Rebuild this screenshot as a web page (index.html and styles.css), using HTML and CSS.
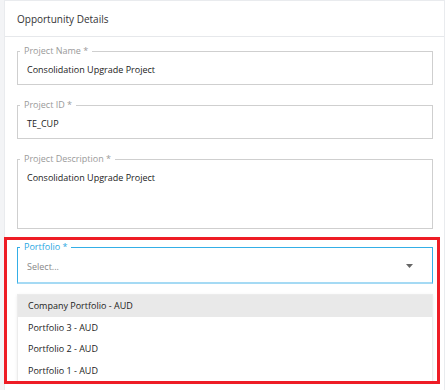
FILE: index.html
```html
<!DOCTYPE html>
<html>
<head>
<meta charset="utf-8">
<link rel="stylesheet" href="styles.css">
</head>
<body>
<div class="card">
  <div class="card-header">Opportunity Details</div>
  <div class="card-body">
    <fieldset class="field">
      <legend>Project Name *</legend>
      <div class="value">Consolidation Upgrade Project</div>
    </fieldset>
    <fieldset class="field">
      <legend>Project ID *</legend>
      <div class="value">TE_CUP</div>
    </fieldset>
    <fieldset class="field field-area">
      <legend>Project Description *</legend>
      <div class="value">Consolidation Upgrade Project</div>
    </fieldset>
    <fieldset class="field field-focus">
      <legend>Portfolio *</legend>
      <div class="select-row">
        <span class="placeholder">Select...</span>
        <svg class="caret" width="7" height="4" viewBox="0 0 7 4"><path d="M0 0H7L3.5 4Z" fill="#666"/></svg>
      </div>
    </fieldset>
    <ul class="menu">
      <li class="active">Company Portfolio - AUD</li>
      <li>Portfolio 3 - AUD</li>
      <li>Portfolio 2 - AUD</li>
      <li>Portfolio 1 - AUD</li>
    </ul>
  </div>
  <div class="highlight"></div>
</div>
</body>
</html>
```
FILE: styles.css
```css
html, body {
  margin: 0;
  padding: 0;
}
body {
  background: #f3f4f6;
  font-family: "Open Sans", "Noto Sans", sans-serif;
  color: #222;
  height: 390px;
  overflow: hidden;
}
.card {
  position: relative;
  margin-left: 4px;
  background: #fff;
  border-top: 1px solid #e9ebee;
  border-left: 1px solid #e9ebee;
  border-right: 1px solid #e9ebee;
  height: 389px;
}
.card-header {
  height: 36px;
  box-sizing: border-box;
  padding: 11px 0 0 12px;
  font-size: 10px;
  line-height: 14px;
  color: #333;
  border-bottom: 1px solid #e6e8eb;
}
.card-body {
  padding: 8px 11px 0 12px;
  display: flex;
  flex-direction: column;
}
.field {
  margin: 0 0 14px 0;
  padding: 6px 9px 7px 9px;
  border: 1px solid #cfcfcf;
  min-width: 0;
}
.field legend {
  font-size: 9px;
  line-height: 12px;
  color: #9a9a9a;
  padding: 0 4px;
  margin-left: -7px;
}
.value {
  font-size: 9px;
  line-height: 14px;
  color: #222;
}
.field-area {
  height: 61px;
  box-sizing: content-box;
  margin-bottom: 12px;
}
.field-focus {
  border-color: #34aee6;
  border-bottom: 2px solid #a5daf4;
  margin-bottom: 10px;
  padding-bottom: 9px;
}
.field-focus legend {
  color: #2aa7e2;
}
.select-row {
  display: flex;
  align-items: center;
  justify-content: space-between;
  height: 14px;
  padding-right: 10px;
}
.placeholder {
  font-size: 9px;
  color: #888;
}
.caret {
  display: block;
}
.menu {
  list-style: none;
  margin: 0;
  padding: 0;
  border: 1px solid #ececec;
  box-shadow: 0 1px 3px rgba(0,0,0,0.08);
}
.menu li {
  font-size: 9px;
  line-height: 21.5px;
  height: 21.5px;
  padding-left: 10px;
  color: #222;
}
.menu li.active {
  background: #e9e9e9;
}
.highlight {
  position: absolute;
  left: -1px;
  top: 236px;
  width: 430px;
  height: 141px;
  border: 3px solid #ee1c25;
  pointer-events: none;
}
```
